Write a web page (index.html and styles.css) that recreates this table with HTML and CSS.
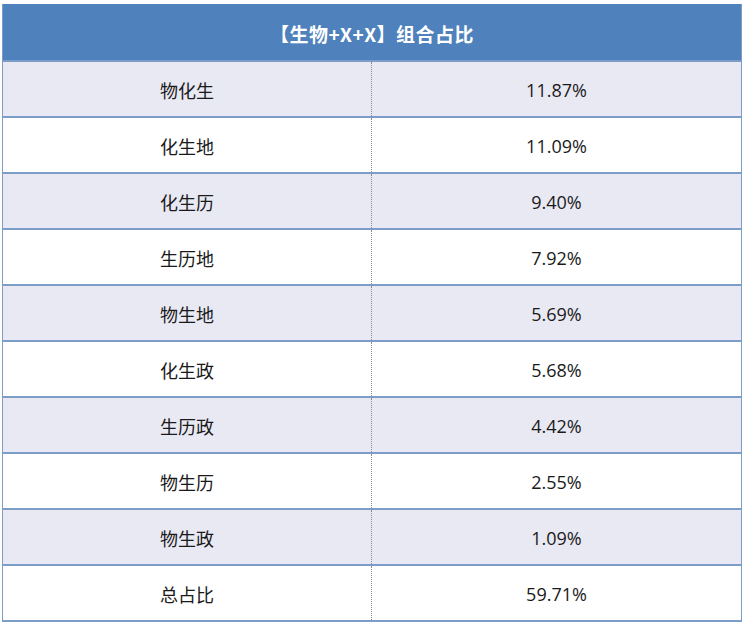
FILE: index.html
```html
<!DOCTYPE html>
<html lang="zh">
<head>
<meta charset="utf-8">
<link rel="stylesheet" href="styles.css">
</head>
<body>
<div class="table">
  <div class="head">【生物+X+X】组合占比</div>
  <div class="row alt"><div class="cell left">物化生</div><div class="cell">11.87%</div></div>
  <div class="row"><div class="cell left">化生地</div><div class="cell">11.09%</div></div>
  <div class="row alt"><div class="cell left">化生历</div><div class="cell">9.40%</div></div>
  <div class="row"><div class="cell left">生历地</div><div class="cell">7.92%</div></div>
  <div class="row alt"><div class="cell left">物生地</div><div class="cell">5.69%</div></div>
  <div class="row"><div class="cell left">化生政</div><div class="cell">5.68%</div></div>
  <div class="row alt"><div class="cell left">生历政</div><div class="cell">4.42%</div></div>
  <div class="row"><div class="cell left">物生历</div><div class="cell">2.55%</div></div>
  <div class="row alt"><div class="cell left">物生政</div><div class="cell">1.09%</div></div>
  <div class="row"><div class="cell left">总占比</div><div class="cell">59.71%</div></div>
</div>
</body>
</html>
```
FILE: styles.css
```css
html, body {
  margin: 0;
  padding: 0;
  background: #ffffff;
}
body {
  padding: 4px 3px 0 2px;
  font-family: "Open Sans", "Noto Sans CJK SC", sans-serif;
  color: #1a1a1a;
}
.table {
  border-left: 1px solid #7d9dc9;
  border-right: 1px solid #7d9dc9;
  border-bottom: 2px solid #7d9dc9;
}
.head {
  height: 56px;
  background: #4f81bd;
  color: #ffffff;
  font-weight: 700;
  font-size: 19px;
  letter-spacing: 0.5px;
  font-family: "Noto Sans CJK SC", sans-serif;
  display: flex;
  align-items: center;
  justify-content: center;
  box-sizing: border-box;
  padding-top: 2px;
}
.row {
  display: grid;
  grid-template-columns: 369px 1fr;
  height: 56px;
  border-top: 2px solid #7d9dc9;
  box-sizing: border-box;
  background: #ffffff;
}
.row.alt {
  background: #e9e9f4;
}
.cell {
  display: flex;
  align-items: center;
  justify-content: center;
  font-size: 18px;
  padding-top: 1px;
}
.cell.left {
  border-right: 1px dotted #8a8a8a;
}
```
